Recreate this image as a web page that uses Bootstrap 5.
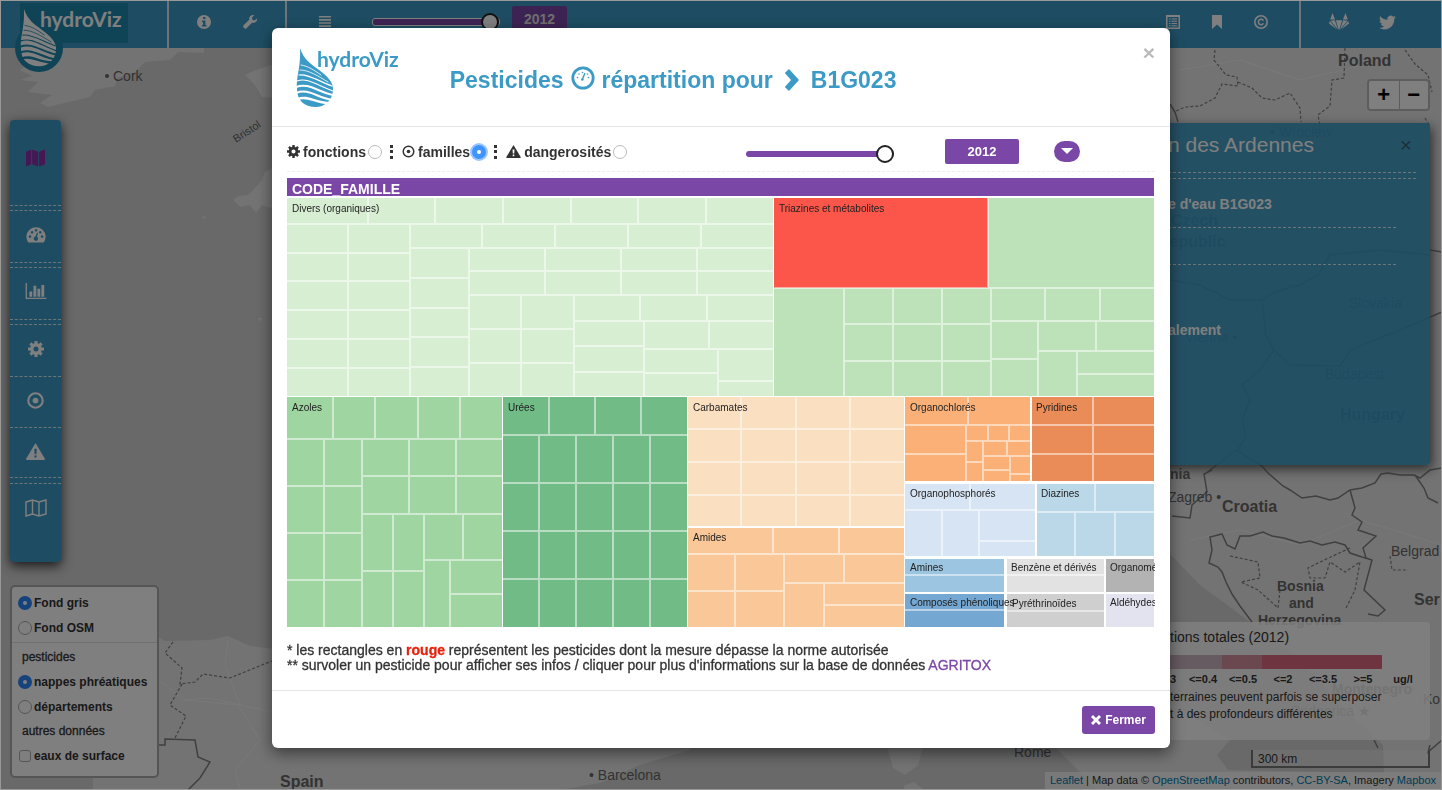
<!DOCTYPE html>
<html lang="fr">
<head>
<meta charset="utf-8">
<meta name="viewport" content="width=device-width, initial-scale=1">
<title>hydroViz</title>
<link href="https://cdn.jsdelivr.net/npm/bootstrap@5.3.0/dist/css/bootstrap.min.css" rel="stylesheet">
<style>
:root { --hv-blue:#3c9bc6; --hv-purple:#7b47a7; }
body { font-family:"Liberation Sans",Arial,sans-serif; font-size:14px; line-height:20px; color:#333; overflow:hidden; background:#d2d2d2; }
body::after { content:""; position:fixed; inset:0; border:1px solid #999; z-index:2000; pointer-events:none; }
.ico { display:block; fill:currentColor; }
.topbar { background:var(--hv-blue); height:48px; z-index:3; }
.topbar a { color:#fff; }
.brandbox { width:167px; padding-left:20px; }
.brandtile { width:108px; height:40px; margin-top:3px; background:#1f86ad; position:relative; }
.brandtile .droplet { position:absolute; left:-5px; top:-1px; color:#fff; }
.logotext { font-family:Lato,"Open Sans",sans-serif; font-weight:700; font-size:21px; line-height:24px; }
.brandtile .logotext { color:#fff; padding:4px 0 0 20px; display:block; }
.tools { width:120px; border-left:2px solid #d8eaf3; border-right:2px solid #d8eaf3; padding:0 27px; }
.timebar { padding-left:30px; }
.timebar a { margin-right:39px; }
.timebar .year { margin-left:12px; }
.datalinks { gap:28px; padding-right:30px; }
.links { border-left:2px solid #d8eaf3; width:143px; padding:0 46px 0 28px; }
.yearslider { appearance:none; -webkit-appearance:none; height:18px; background:transparent; margin:0; }
.yearslider::-webkit-slider-runnable-track { height:6px; background:var(--hv-purple); border-radius:3px; }
.yearslider::-webkit-slider-thumb { -webkit-appearance:none; width:18px; height:18px; margin-top:-6px; border-radius:50%; background:#fff; border:2px solid #222; }
.topbar .yearslider { width:128px; }
.topbar .yearslider::-webkit-slider-runnable-track { height:8px; border:1px solid #fff; }
.year { background:var(--hv-purple); color:#fff; border:0; border-radius:2px; font-weight:700; font-size:14px; }
.topbar .year { width:55px; height:26px; margin-top:-6px; color:#ddd; }
.mapbg { position:absolute; inset:0; width:100%; height:100%; }
.leftcol { position:absolute; left:10px; top:72px; bottom:12px; }
.rightcol { position:absolute; right:12px; top:31px; bottom:1px; }
.sidebar { width:51px; background:var(--hv-blue); border-radius:4px; box-shadow:0 4px 12px #333; }
.sidebar a { height:51px; color:#fff; display:flex; align-items:center; justify-content:center; border-top:1px dashed #d8eaf3; padding-bottom:4px; }
.sidebar a.first { height:85px; color:#8d2fa8; border:0; padding-bottom:9px; }
.sidebar a.dbl { margin-top:5px; height:52px; }
.sidebar a.dbl::before { content:""; position:absolute; width:51px; margin-top:-58px; border-top:1px dashed #d8eaf3; }
.sidebar a.last { height:79px; align-items:flex-start; padding-top:15px; }
.sidebar a.last::before { margin-top:-22px; }
.layers { width:149px; background:#fff; border:2px solid #aaa; border-radius:5px; padding:3px 6px 8px; font-weight:700; font-size:12px; line-height:24px; }
.layers label, .layers .cap { height:25px; display:flex; align-items:center; gap:2px; }
.layers .cap { height:24px; padding-left:4px; font-weight:400; -webkit-text-stroke:.3px #333; }
.layers hr { margin:2px -6px; color:#888; }
.pick { appearance:none; -webkit-appearance:none; width:14px; height:14px; border:1px solid #bbb; border-radius:50%; background:#fff; margin:0; flex:none; }
.pick:checked { border:5px solid #3f95ff; background:#fff; }
.layers .pick { border-color:#aaa; }
.layers .pick:checked { border-color:#2c86f7; }
.pick.box { border-radius:3px; width:12px; height:12px; margin:0 1px; }
.zoomer { border:2px solid #bbb; border-radius:4px; background:#fff; width:63px; }
.zoomer button { border:0; background:none; width:50%; height:28px; font-size:22px; font-weight:700; color:#000; line-height:26px; padding:0; }
.zoomer button + button { border-left:1px solid #bbb; }
.info { width:290px; height:342px; margin-top:12px; background:rgba(60,155,198,.93); border-radius:3px; box-shadow:2px 4px 12px #555; color:#fff; padding:9px 14px 0 28px; }
.info h2 { font-size:21px; line-height:26px; font-weight:400; margin:0; }
.info .rules { border:dashed #d8eaf3; border-width:1px 0; height:7px; margin:14px 0 15px; }
.info .rules.tall { height:38px; margin:13px 20px 55px 0; }
.legendbox { width:290px; height:118px; background:rgba(255,255,255,.85); border-radius:4px; font-size:12px; line-height:17px; padding:6px 0 0 30px; }
.legendbox .ttl { font-size:14px; line-height:18px; }
.ramp { height:14px; width:212px; margin-top:9px; }
.steps { font-weight:700; font-size:11px; line-height:20px; }
.steps span { width:40px; text-align:center; }
.steps span:first-child { width:14px; margin-right:-1px; text-align:left; }
.scalebar { width:179px; height:18px; border:2px solid #777; border-top:0; font-size:12px; line-height:18px; padding-left:5px; margin-top:10px; background:rgba(255,255,255,.3); }
.credit { font-size:11px; line-height:17px; background:rgba(255,255,255,.7); padding:0 5px; margin-right:-11px; white-space:nowrap; }
.credit a { color:#0078a8; text-decoration:none; }
.modal-dialog { max-width:898px; margin:28px auto; }
.modal-content { border:0; border-radius:6px; box-shadow:0 5px 15px rgba(0,0,0,.5); color:#333; }
.modal-header { height:99px; padding:0 15px 0 24px; border-bottom:1px solid #e5e5e5; }
.modal-header .droplet { color:var(--hv-blue); }
.modal-header .logotext { color:var(--hv-blue); margin:19px 0 0 -17px; }
.modal-title { font-size:23px; line-height:28px; font-weight:700; color:var(--hv-blue); margin:38px 0 0 51px; gap:7px; }
.shut { border:0; background:none; color:#bbb; font-size:21px; font-weight:700; line-height:20px; padding:0; margin-top:15px; }
.modal-body { padding:0 15px 17px; }
.controls { height:45px; border-bottom:1px dashed #eee; padding-top:5px; font-weight:700; }
.controls .pick { margin-left:2px; }
.controls .pick:checked { box-shadow:0 0 0 2px #9cc8ff; }
.controls label { gap:3px; }
.vdots { width:3px; height:14px; border-left:3px dotted #333; margin:0 9px 0 8px; }
.controls .yearslider { width:148px; margin-top:4px; }
.controls .year { width:74px; height:25px; font-size:13px; margin:0 35px 0 51px; }
.pill { background:var(--hv-purple); border:0; border-radius:11px; width:26px; height:21px; padding:0; margin-right:75px; color:#fff; }
.treemap { display:block; width:100%; margin-top:6px; font-size:10px; fill:#222; }
.treemap path { fill:none; stroke:#fff; stroke-opacity:.5; stroke-width:2; }
.treemap .hd { font-size:14px; font-weight:700; fill:#fff; }
.notes { margin:16px 0 0; line-height:15px; -webkit-text-stroke:.3px currentColor; }
.notes a { color:var(--hv-purple); text-decoration:none; }
.notes .red { color:#e8220c; font-weight:700; }
.modal-footer { height:58px; padding:0 15px; border-top:1px solid #e5e5e5; }
.modal-footer .btn { background:var(--hv-purple); color:#fff; font-size:12px; font-weight:700; line-height:18px; width:73px; height:28px; padding:0; border:0; border-radius:3px; margin:0; }
.mp { font-size:14px; fill:#666; }
.mp .big { font-weight:700; font-size:16px; }
</style>
</head>
<body class="vh-100 d-flex flex-column">
<svg width="0" height="0" class="position-absolute" aria-hidden="true">
  <symbol id="drop" viewBox="0 0 38 60">
    <path d="M4 0C8 12 15 16 23 22C31 28 38 34 37 43C36 53 28 59 20 59C8 59 1 52 1 41C0 28 5 20 4 0Z"/>
    <g fill="none" stroke="var(--stripe)" stroke-linecap="round">
      <path stroke-width=".8" d="M5 17C12 18 18 22 25 27M4 22C13 22 22 28 32 34"/>
      <path stroke-width="1.200" d="M3 27C13 26 22 33 36 38M1 33C12 29 22 38 37 43"/>
      <path stroke-width="2" d="M0 39C12 34 22 44 37 47M0 45C12 40 20 49 36 52"/>
      <path stroke-width="2.400" d="M2 51C11 47 20 55 32 55"/>
    </g>
  </symbol>
  <symbol id="infoc" viewBox="0 0 16 16"><path fill-rule="evenodd" d="M8 1a7 7 0 1 0 0 14A7 7 0 0 0 8 1ZM7 3h2.400v2H7ZM6 6.500h3.400V11H10.500v1.500H6V11h1V8H6Z"/></symbol>
  <symbol id="wrench" viewBox="0 0 16 16"><path d="M15 4.500 12.500 6.500 10.300 5.800 10 3.500 12.200 1.300C9.500.4 6.800 2.500 7.200 5.700L1.400 11.600C.3 12.800 2.900 15.600 4.200 14.500L10 8.800C13.200 9.400 15.600 7 15 4.500Z"/></symbol>
  <symbol id="lines" viewBox="0 0 16 16"><path d="M2 2h12v1.600H2ZM2 5.100h12v1.600H2ZM2 8.200h12v1.600H2ZM2 11.300h12v1.600H2Z"/></symbol>
  <symbol id="sheet" viewBox="0 0 16 16"><path fill-rule="evenodd" d="M1 1h14v14H1ZM2.500 3v10.500h11V3ZM4 4.500h1.500v1H4ZM6.500 4.500H12v1H6.500ZM4 6.700h1.500v1H4ZM6.500 6.700H12v1H6.500ZM4 9h1.500v1H4ZM6.500 9H12v1H6.500ZM4 11.200h1.500v1H4ZM6.500 11.200H12v1H6.500Z"/></symbol>
  <symbol id="bookmark" viewBox="0 0 16 16"><path d="M3 1h10v14L8 10.500 3 15Z"/></symbol>
  <symbol id="copyr" viewBox="0 0 16 16"><g fill="none" stroke="currentColor"><circle cx="8" cy="8" r="6.200" stroke-width="1.600"/><path stroke-width="1.500" d="M10.400 6.600A2.700 2.700 0 1 0 10.400 9.400"/></g></symbol>
  <symbol id="fox" viewBox="0 0 20 18"><path d="M3.500 0 6 6.500H1.200ZM16.500 0 18.800 6.500H14ZM6.800 7.200h6.400L10 17.500ZM5.800 7.200 9 16.500 1.500 7.700ZM14.200 7.200 11 16.500 18.500 7.700ZM.8 8 0 10.500 8 16.500ZM19.200 8 20 10.500 12 16.500Z"/></symbol>
  <symbol id="bird" viewBox="0 0 24 24"><path d="M23.950 4.570a10 10 0 0 1-2.820.770 4.960 4.960 0 0 0 2.160-2.720c-.950.550-2 .950-3.130 1.180a4.920 4.920 0 0 0-8.380 4.480C7.690 8.100 4.070 6.130 1.640 3.160a4.820 4.820 0 0 0-.670 2.480c0 1.710.870 3.210 2.190 4.100a4.900 4.900 0 0 1-2.230-.620v.060a4.920 4.920 0 0 0 3.950 4.830 5 5 0 0 1-2.210.080 4.940 4.940 0 0 0 4.600 3.420A9.870 9.870 0 0 1 0 19.540a13.990 13.990 0 0 0 7.550 2.210c9.050 0 14-7.500 14-13.980 0-.210 0-.420-.020-.630a9.940 9.940 0 0 0 2.420-2.570Z"/></symbol>
  <symbol id="mapf" viewBox="0 0 20 18"><path d="M0 2.500 5.500 0v15.500L0 18ZM6.500 0 12.800 2.500V18L6.500 15.500ZM13.800 2.500 20 0v15.500L13.800 18Z"/></symbol>
  <symbol id="mapo" viewBox="0 0 22 18"><path fill="none" stroke="currentColor" stroke-width="1.400" d="M1 3 7.500 1 14 3 21 1V15L14 17 7.500 15 1 17ZM7.500 1V15M14 3V17"/></symbol>
  <symbol id="dash" viewBox="0 0 20 16"><path fill-rule="evenodd" d="M2.300 15.500A9.600 9.600 0 1 1 17.700 15.500ZM4 8.200a1.300 1.300 0 1 0 .1 0ZM6 4a1.300 1.300 0 1 0 .1 0ZM10 2a1.300 1.300 0 1 0 .1 0ZM14.200 4a1.300 1.300 0 1 0 .1 0ZM16 8.200a1.300 1.300 0 1 0 .1 0ZM11 5.500 9.500 9.500a2.200 2.200 0 1 0 1.500.3L12 6Z"/></symbol>
  <symbol id="bars" viewBox="0 0 22 18"><path d="M0 0h1.400v15.500H22V17H0ZM4 9h3v5.500H4ZM8.300 3h3v11.500h-3ZM12.500 6h3v8.500h-3ZM16.700 2h3v12.500h-3Z"/></symbol>
  <symbol id="cog" viewBox="0 0 16 16"><circle cx="8" cy="8" r="4.200" fill="none" stroke="currentColor" stroke-width="3.400"/><g stroke="currentColor" stroke-width="3"><path d="M8 0v3M8 13v3M0 8h3M13 8h3M2.400 2.400l2 2M11.600 11.600l2 2M2.400 13.600l2-2M11.600 4.400l2-2"/></g></symbol>
  <symbol id="target" viewBox="0 0 16 16"><circle cx="8" cy="8" r="6.800" fill="none" stroke="currentColor" stroke-width="2"/><circle cx="8" cy="8" r="2.700"/></symbol>
  <symbol id="warn" viewBox="0 0 18 16"><path fill-rule="evenodd" d="M9 0 18 15.200Q18 16 17 16H1Q0 16 0 15.200ZM7.800 5.500 8.200 10.500h1.700L10.200 5.500ZM8 11.800v2h2v-2Z"/></symbol>
  <symbol id="gauge" viewBox="0 0 24 24"><circle cx="12" cy="12" r="10.200" fill="none" stroke="currentColor" stroke-width="2.800"/><path fill="none" stroke="currentColor" stroke-width="1.400" d="M14 7 11.500 13"/><circle cx="11.300" cy="13.500" r="1.300"/><circle cx="6.500" cy="11.500" r=".8"/><circle cx="8" cy="8" r=".8"/><circle cx="11.500" cy="6.500" r=".8"/><circle cx="17.500" cy="11.500" r=".8"/><circle cx="16.500" cy="8" r=".8"/></symbol>
  <symbol id="chev" viewBox="0 0 16 22"><path d="M5 0 15 11 5 22 .8 18 7 11 .8 4Z"/></symbol>
</svg>

<nav class="topbar navbar p-0 flex-nowrap align-items-stretch justify-content-start position-relative">
  <a href="#" class="brandbox text-decoration-none">
    <span class="brandtile d-block">
      <svg class="droplet ico" width="50" height="72" viewBox="0 0 50 72" style="--stripe:#1f86ad"><circle cx="24" cy="46" r="24" fill="#1f86ad"/><use href="#drop" x="5" y="6" width="37" height="60"/></svg>
      <span class="logotext position-relative">hydroViz</span>
    </span>
  </a>
  <div class="tools d-flex align-items-center justify-content-between pb-1">
    <a href="#" aria-label="Informations"><svg class="ico" width="16" height="16"><use href="#infoc"/></svg></a>
    <a href="#" aria-label="Outils"><svg class="ico" width="16" height="16"><use href="#wrench"/></svg></a>
  </div>
  <div class="timebar d-flex align-items-center pb-1">
    <a href="#" aria-label="Menu"><svg class="ico" width="16" height="16"><use href="#lines"/></svg></a>
    <input type="range" class="yearslider" min="2007" max="2012" value="2012" aria-label="Année">
    <button type="button" class="year">2012</button>
  </div>
  <div class="datalinks d-flex align-items-center ms-auto pb-1">
    <a href="#" aria-label="Données"><svg class="ico" width="16" height="16"><use href="#sheet"/></svg></a>
    <a href="#" aria-label="Favoris"><svg class="ico" width="16" height="16"><use href="#bookmark"/></svg></a>
    <a href="#" aria-label="Licence"><svg class="ico" width="16" height="16"><use href="#copyr"/></svg></a>
  </div>
  <div class="links d-flex align-items-center justify-content-between pb-1">
    <a href="#" aria-label="GitLab"><svg class="ico" width="20" height="18"><use href="#fox"/></svg></a>
    <a href="#" aria-label="Twitter"><svg class="ico" width="17" height="17"><use href="#bird"/></svg></a>
  </div>
</nav>

<main class="flex-grow-1 position-relative">
  <svg class="mapbg" viewBox="0 48 1442 742" preserveAspectRatio="xMidYMid slice" aria-hidden="true">
    <rect y="48" width="1442" height="742" fill="#d2d2d2"/>
    <g fill="#e6e6e6">
      <path d="M40 48 34 58 20 70 32 76 20 80 38 82 28 92 52 95 40 103 48 107 65 103 90 97 95 90 115 86 117 78 135 72 145 62 170 60 178 52 204 53V48Z"/>
      <path d="M245 75 256 70 272 65 300 60V100L262 97 255 85ZM233 200 238 196 248 195 255 188 262 180 265 172 290 160V214L262 205 256 213 250 205 240 207ZM202 215 206 218 203 219ZM258 318 262 318 260 322Z"/>
      <path d="M93 790V777L104 740 118 690 115 640 158 637 165 641 210 640 228 636 250 646 300 652 700 700 690 750 640 765 600 783 560 790Z"/>
      <path d="M888 750 898 740H925L918 765 905 775 893 768ZM905 785 914 782 924 790H903ZM1000 748H1056L1078 770 1095 790H1442V48H1150V520L1000 700Z"/>
    </g>
    <g fill="#d2d2d2"><path d="M1150 545 1172 556 1200 585 1250 622 1300 660 1350 715 1383 745 1384 773 1228 770 1217 755 1230 740 1150 690Z"/></g>
    <g fill="none" stroke="#f2f2f2"><path d="M158 680 185 700 238 705 260 740 235 770 240 790M228 640 225 665 240 705M185 700 210 698 272 712M1180 70 1240 60 1300 80 1360 66M1190 540 1240 530 1300 545 1360 520 1442 545"/></g>
    <g fill="none" stroke="#808080" stroke-width="1.200">
      <path stroke-dasharray="3 2" d="M1215 50 1214 60 1222 70 1226 75 1237 77 1238 86 1222 84 1215 98 1200 106 1185 107 1174 112M1238 82 1252 88 1262 98 1275 100 1290 93 1300 108 1301 122M1345 48 1344 78 1332 80 1330 106 1318 115 1320 126M1405 50 1415 64 1428 75 1432 92M1425 118 1430 126M173 642 165 653 182 668 180 684 195 682 203 674 230 678 272 661M182 684 170 705 186 716 175 738M1230 556 1258 562 1260 578 1241 582 1258 590 1278 608 1280 590M1350 548 1320 562 1308 568 1310 578 1325 578 1330 562 1345 572 1360 562 1355 590 1346 608M1390 556 1392 570 1408 570"/>
      <path stroke-width="1.500" d="M1212 470 1204 474 1207 492 1192 505 1190 518 1172 516M1205 474 1236 450 1262 466 1268 473 1283 486 1290 490 1302 498 1316 496 1330 500 1338 498 1350 490 1362 488 1375 483 1381 474 1388 473 1400 475 1414 475 1420 478 1430 470 1442 468M1415 475 1424 488 1428 498 1438 503M1350 490 1355 508 1352 515 1362 522 1358 530 1376 536 1363 548 1366 558 1372 560 1364 590 1385 610 1378 616 1368 614M1238 450 1246 435 1242 420 1250 400 1242 385 1260 370 1274 350 1266 335 1262 300 1230 300 1200 285 1170 280M1274 350 1290 365 1340 366 1350 350 1400 330 1442 312M1262 300 1275 292 1300 285 1318 275 1330 255 1380 250 1430 255M1442 252 1430 250M1372 560 1362 557 1350 553 1345 545 1335 542 1322 545 1310 541 1300 543 1284 538 1272 536 1263 532 1250 536 1240 536 1235 549 1227 545 1222 534 1210 537 1212 550 1209 563 1218 567 1222 572 1226 582 1232 594 1240 606 1252 622M158 745 165 745 165 739 195 740 198 757 210 762 200 778 188 790M1170 104 1175 112 1178 122M1378 748 1374 740M1430 745 1428 752 1442 740"/>
    </g>
    <g class="mp">
      <circle cx="107" cy="76" r="2"/><text x="113" y="81">Cork</text>
      <text font-size="11" transform="translate(236 143) rotate(-33)">Bristol</text>
      <text x="1338" y="66" class="big" font-size="18">Poland</text>
      <text x="1270" y="137">• Wrocław</text><text x="1171" y="226" class="big">Czech</text><text x="1158" y="247" class="big">Republic</text>
      <text x="1349" y="308">Slovakia</text><text x="1185" y="342">Vienna •</text><text x="1325" y="379">Budapest</text><text x="1340" y="420" class="big">Hungary</text>
      <text x="1170" y="479" font-weight="700">nia</text><text x="1168" y="502">Zagreb •</text><text x="1222" y="512" class="big">Croatia</text>
      <text x="1277" y="591" font-weight="700">Bosnia</text><text x="1289" y="608" font-weight="700">and</text><text x="1258" y="625" font-weight="700">Herzegovina</text>
      <text x="1391" y="556">Belgrad</text><text x="1414" y="605" class="big">Ser</text>
      <text x="1332" y="694" font-weight="700">Montenegro</text><text x="1291" y="716">Podgorica ★</text><text x="1423" y="704">Ko</text>
      <text x="280" y="787" class="big">Spain</text><text x="589" y="780">• Barcelona</text><text x="1014" y="757">Rome</text>
    </g>
  </svg>

  <div class="leftcol d-flex flex-column justify-content-between">
    <nav class="sidebar position-relative">
      <a href="#" class="first" aria-label="Carte"><svg class="ico" width="19" height="18"><use href="#mapf"/></svg></a>
      <a href="#" class="dbl" aria-label="Tableau de bord"><svg class="ico" width="20" height="16"><use href="#dash"/></svg></a>
      <a href="#" class="dbl" aria-label="Graphiques"><svg class="ico" width="22" height="17"><use href="#bars"/></svg></a>
      <a href="#" class="dbl" aria-label="Fonctions"><svg class="ico" width="16" height="16"><use href="#cog"/></svg></a>
      <a href="#" aria-label="Familles"><svg class="ico" width="17" height="17"><use href="#target"/></svg></a>
      <a href="#" aria-label="Dangerosités"><svg class="ico" width="19" height="17"><use href="#warn"/></svg></a>
      <a href="#" class="dbl last" aria-label="Fonds de carte"><svg class="ico" width="22" height="18"><use href="#mapo"/></svg></a>
    </nav>
    <form class="layers">
      <label><input class="pick" type="radio" name="fond" checked>Fond gris</label>
      <label><input class="pick" type="radio" name="fond">Fond OSM</label>
      <hr>
      <div class="cap">pesticides</div>
      <label><input class="pick" type="radio" name="couche" checked>nappes phréatiques</label>
      <label><input class="pick" type="radio" name="couche">départements</label>
      <div class="cap">autres données</div>
      <label><input class="pick box" type="checkbox">eaux de surface</label>
    </form>
  </div>

  <div class="rightcol d-flex flex-column align-items-end">
    <div class="zoomer d-flex"><button type="button">+</button><button type="button">−</button></div>
    <section class="info">
      <div class="d-flex justify-content-between align-items-center"><h2>n des Ardennes</h2><button type="button" class="shut m-0 me-1 text-dark opacity-50 fw-normal" aria-label="Fermer">×</button></div>
      <div class="rules"></div>
      <div class="fw-bold">e d'eau B1G023</div>
      <div class="rules tall"></div>
      <div class="fw-bold">alement</div>
    </section>
    <section class="legendbox mt-auto">
      <div class="ttl">tions totales (2012)</div>
      <div class="ramp d-flex"><svg width="100%" height="14" preserveAspectRatio="none" viewBox="0 0 212 14" aria-hidden="true"><path fill="#cdb6c2" d="M0 0h52v14H0Z"/><path fill="#d78f9f" d="M52 0h40v14H52Z"/><path fill="#dc6b80" d="M92 0h120v14H92Z"/></svg></div>
      <div class="steps d-flex"><span>3</span><span>&lt;=0.4</span><span>&lt;=0.5</span><span>&lt;=2</span><span>&lt;=3.5</span><span>&gt;=5</span><span>ug/l</span></div>
      <div>terraines peuvent parfois se superposer<br>t à des profondeurs différentes</div>
    </section>
    <div class="scalebar">300 km</div>
    <div class="credit mt-1"><a href="#">Leaflet</a> | Map data © <a href="#">OpenStreetMap</a> contributors, <a href="#">CC-BY-SA</a>, Imagery <a href="#">Mapbox</a></div>
  </div>
</main>

<div class="modal-backdrop show"></div>
<div class="modal d-block" role="dialog" aria-labelledby="mtitle">
  <div class="modal-dialog">
    <div class="modal-content">
      <div class="modal-header align-items-start justify-content-start">
        <svg class="droplet ico mt-3" width="38" height="68" viewBox="0 0 38 68" style="--stripe:#fff"><use href="#drop" y="4" width="38" height="60"/></svg>
        <span class="logotext">hydroViz</span>
        <h4 class="modal-title d-flex align-items-center" id="mtitle">Pesticides <svg class="ico mb-1" width="24" height="24"><use href="#gauge"/></svg> répartition pour <svg class="ico mx-1" width="16" height="22"><use href="#chev"/></svg> B1G023</h4>
        <button type="button" class="shut ms-auto" aria-label="Fermer">×</button>
      </div>
      <div class="modal-body">
        <div class="controls d-flex align-items-center">
          <label class="d-flex align-items-center" for="r1"><svg class="ico" width="13" height="13" viewBox="0 0 16 16"><use href="#cog"/></svg>fonctions</label><input class="pick" id="r1" type="radio" name="vue">
          <span class="vdots"></span>
          <label class="d-flex align-items-center" for="r2"><svg class="ico" width="13" height="13" viewBox="0 0 16 16"><circle cx="8" cy="8" r="6.500" fill="none" stroke="currentColor" stroke-width="1.800"/><circle cx="8" cy="8" r="2.200"/></svg>familles</label><input class="pick" id="r2" type="radio" name="vue" checked>
          <span class="vdots"></span>
          <label class="d-flex align-items-center" for="r3"><svg class="ico" width="15" height="13"><use href="#warn"/></svg>dangerosités</label><input class="pick" id="r3" type="radio" name="vue">
          <input type="range" class="yearslider ms-auto" min="2007" max="2012" value="2012" aria-label="Année">
          <button type="button" class="year">2012</button>
          <button type="button" class="pill" aria-label="Options"><svg class="ico m-auto" width="12" height="7" viewBox="0 0 12 7"><path d="M0 0h12L6 6Z"/></svg></button>
        </div>
        <svg class="treemap" viewBox="0 0 868 449">
          <rect width="867" height="18" fill="#7b47a7"/><text class="hd" x="5" y="16">CODE_FAMILLE</text>
          <rect x="0" y="20" width="486" height="198" fill="#d7eed3"/>
          <path d="M0 46H486M81 20V46M148 20V46M216 20V46M284 20V46M351 20V46M419 20V46M61 46V218M123 46V218M0 75H123M0 103H123M0 132H123M0 161H123M0 190H123M123 70H486M195 46V70M268 46V70M341 46V70M414 46V70M182 70V218M123 100H182M123 130H182M123 159H182M123 189H182M182 93H486M182 117H486M258 70V117M334 70V117M410 70V117M234 117V218M287 117V218M182 151H287M182 185H287M287 143H486M353 117V143M420 117V143M357 143V218M287 168H357M287 194H357M422 143V171M357 171H486M431 171V218M357 195H431M431 203H486"/>
          <rect x="487" y="20" width="380" height="198" fill="#bde2b9"/><rect x="487" y="20" width="214" height="90" fill="#fc5549"/>
          <path d="M487 110H867M701 20V110M557 110V218M606 110V218M655 110V218M704 110V218M557 146H704M557 183H704M704 143H867M758 110V143M813 110V143M751 143V218M704 181H751M809 143V173M751 173H867M790 173V218M790 196H867"/>
          <rect x="0" y="219" width="215" height="230" fill="#9fd5a0"/>
          <path d="M0 261H215M46 219V261M88 219V261M131 219V261M173 219V261M37 261V449M75 261V449M0 308H75M0 355H75M0 402H75M75 298H215M75 336H215M122 261V336M169 261V336M106 336V449M137 336V449M75 393H137M137 382H215M176 336V382M163 382V449M163 416H215"/>
          <rect x="216" y="219" width="184" height="230" fill="#70bb86"/>
          <path d="M216 257H400M262 219V257M308 219V257M354 219V257M252 257V449M289 257V449M326 257V449M363 257V449M216 305H400M216 353H400M216 401H400"/>
          <rect x="401" y="219" width="216" height="129" fill="#fadfc0"/>
          <path d="M454 219V348M509 219V348M563 219V348M401 251H617M401 284H617M401 317H617"/>
          <rect x="401" y="350" width="216" height="99" fill="#fac898"/>
          <path d="M401 376H617M486 350V376M552 350V376M448 376V449M497 376V449M401 413H497M497 405H617M557 376V405M537 405V449M537 427H617"/>
          <rect x="618" y="219" width="125" height="84" fill="#fab077"/>
          <path d="M618 247H743M681 219V247M679 247V303M618 276H679M679 263H743M701 247V263M722 247V263M696 263V303M679 284H696M696 278H743M720 263V278M723 278V303M696 292H723M723 296H743"/>
          <rect x="745" y="219" width="122" height="84" fill="#ea8c57"/><path d="M806 219V303M745 247H867M745 276H867"/>
          <rect x="618" y="306" width="130" height="72" fill="#d6e4f3"/><path d="M683 306V332M618 332H748M655 332V378M692 332V378M692 363H748"/>
          <rect x="750" y="306" width="117" height="72" fill="#bbd8e9"/><path d="M808 306V334M750 334H867M788 334V378M828 334V378"/>
          <rect x="618" y="381" width="99" height="33" fill="#9bc5e1"/><rect x="618" y="416" width="99" height="33" fill="#74a7d1"/>
          <rect x="720" y="381" width="97" height="33" fill="#e2e2e2"/><rect x="720" y="416" width="97" height="33" fill="#cfcfcf"/>
          <rect x="819" y="381" width="48" height="33" fill="#b3b3b3"/><rect x="819" y="416" width="48" height="33" fill="#e3e2ef"/>
          <path d="M618 397H717M618 432H717M720 397H817M720 433H817"/>
          <text x="5" y="34">Divers (organiques)</text><text x="492" y="34">Triazines et métabolites</text>
          <text x="5" y="233">Azoles</text><text x="221" y="233">Urées</text><text x="406" y="233">Carbamates</text><text x="406" y="363">Amides</text>
          <text x="623" y="233">Organochlorés</text><text x="749" y="233">Pyridines</text><text x="623" y="319">Organophosphorés</text><text x="754" y="319">Diazines</text>
          <text x="623" y="393">Amines</text><text x="623" y="428">Composés phénoliques</text><text x="724" y="393">Benzène et dérivés</text><text x="725" y="429">Pyréthrinoïdes</text>
          <text x="823" y="393">Organomé</text><text x="823" y="428">Aldéhydes</text>
        </svg>
        <p class="notes">* les rectangles en <span class="red">rouge</span> représentent les pesticides dont la mesure dépasse la norme autorisée<br>** survoler un pesticide pour afficher ses infos / cliquer pour plus d'informations sur la base de données <a href="#">AGRITOX</a></p>
      </div>
      <div class="modal-footer">
        <button type="button" class="btn d-flex align-items-center justify-content-center gap-1"><svg class="ico" width="10" height="10" viewBox="0 0 10 10"><path d="M0 2 2 0 5 3 8 0 10 2 7 5 10 8 8 10 5 7 2 10 0 8 3 5Z"/></svg>Fermer</button>
      </div>
    </div>
  </div>
</div>
<script src="https://cdn.jsdelivr.net/npm/bootstrap@5.3.0/dist/js/bootstrap.bundle.min.js"></script>
</body>
</html>
